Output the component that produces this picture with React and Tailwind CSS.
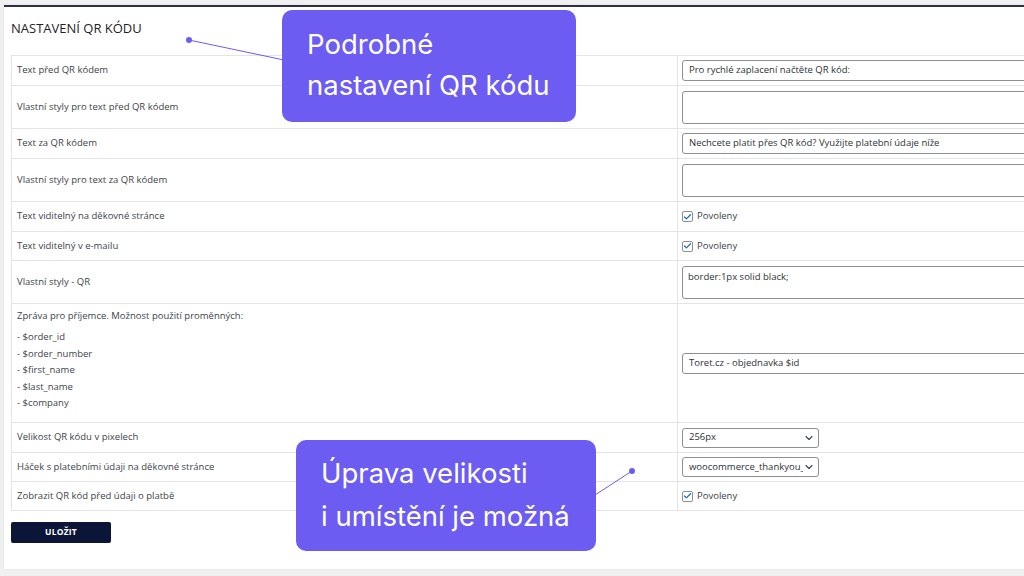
import { ChevronDown, Check } from "lucide-react";

const font = { fontFamily: '"Open Sans", "Noto Sans", sans-serif' };

const Input = ({ value }) => (
  <div className="h-[21px] w-[400px] border border-[#8c8f94] rounded-[3px] bg-white flex items-center px-[6px] text-[9.5px] text-[#2c3338]">
    {value}
  </div>
);

const Area = ({ value }) => (
  <div className="h-[33px] w-[400px] border border-[#8c8f94] rounded-[3px] bg-white px-[5px] pt-[3px] text-[9.5px] leading-[14px] text-[#2c3338]">
    {value}
  </div>
);

const Checkbox = () => (
  <div className="flex items-center gap-[4px] text-[9.5px] text-[#3c434a]">
    <div className="w-[11px] h-[11px] border border-[#8c8f94] rounded-[2px] bg-white flex items-center justify-center">
      <Check size={10} strokeWidth={3.5} className="text-[#2271b1]" />
    </div>
    Povoleny
  </div>
);

const Select = ({ value }) => (
  <div className="h-[20px] w-[137px] border border-[#8c8f94] rounded-[3px] bg-white flex items-center pl-[6px] pr-[3px] text-[9.5px] text-[#2c3338]">
    <span className="flex-1 min-w-0 whitespace-nowrap overflow-hidden">{value}</span>
    <ChevronDown size={12} strokeWidth={2.2} className="text-[#3c434a] shrink-0" />
  </div>
);

const Row = ({ h, label, children, top }) => (
  <div className={`flex border-b border-[#e4e4e7] ${h}`}>
    <div
      className={`w-[665px] shrink-0 pl-[5px] text-[9.5px] text-[#3c434a] flex ${
        top ? "items-start" : "items-center"
      }`}
    >
      {label}
    </div>
    <div className="flex-1 border-l border-[#e4e4e7] pl-[4px] flex items-center">
      {children}
    </div>
  </div>
);

export default function App() {
  const vars = ["$order_id", "$order_number", "$first_name", "$last_name", "$company"];
  return (
    <div
      className="relative w-[1024px] h-[576px] overflow-hidden bg-[#f0f0f1] pt-[5px] pl-[4px]"
      style={font}
    >
      <div className="w-[1040px] h-[564px] bg-white border-t-2 border-[#2d2f45] shadow-[0_0_1px_rgba(0,0,0,0.15)] pl-[7px]">
        <h2 className="pt-[13px] text-[13px] leading-[16px] text-[#1d2327] uppercase">
          Nastavení QR kódu
        </h2>

        <div className="mt-[19px] border-t border-l border-[#e4e4e7] w-[1040px]">
          <Row h="h-[30px]" label="Text před QR kódem">
            <Input value="Pro rychlé zaplacení načtěte QR kód:" />
          </Row>
          <Row h="h-[43px]" label="Vlastní styly pro text před QR kódem">
            <Area value="" />
          </Row>
          <Row h="h-[30px]" label="Text za QR kódem">
            <Input value="Nechcete platit přes QR kód? Využijte platební údaje níže" />
          </Row>
          <Row h="h-[43px]" label="Vlastní styly pro text za QR kódem">
            <Area value="" />
          </Row>
          <Row h="h-[30px]" label="Text viditelný na děkovné stránce">
            <Checkbox />
          </Row>
          <Row h="h-[29px]" label="Text viditelný v e-mailu">
            <Checkbox />
          </Row>
          <Row h="h-[43px]" label="Vlastní styly - QR">
            <Area value="border:1px solid black;" />
          </Row>
          <Row
            h="h-[119px]"
            top
            label={
              <div className="pt-[5px]">
                <div className="leading-[13px]">
                  Zpráva pro příjemce. Možnost použití proměnných:
                </div>
                <div className="mt-[7px]">
                  {vars.map((v) => (
                    <div key={v} className="leading-[16.5px]">
                      - {v}
                    </div>
                  ))}
                </div>
              </div>
            }
          >
            <Input value="Toret.cz - objednavka $id" />
          </Row>
          <Row h="h-[30px]" label="Velikost QR kódu v pixelech">
            <Select value="256px" />
          </Row>
          <Row h="h-[29px]" label="Háček s platebními údaji na děkovné stránce">
            <Select value="woocommerce_thankyou_$" />
          </Row>
          <Row h="h-[29px]" label="Zobrazit QR kód před údaji o platbě">
            <Checkbox />
          </Row>
        </div>

        <button className="mt-[11px] w-[100px] h-[21px] rounded-[2px] bg-[#0b1538] text-white text-[8.5px] font-bold tracking-wide">
          ULOŽIT
        </button>
      </div>

      <svg className="absolute left-0 top-0 pointer-events-none" width="1024" height="576">
        <line x1="189" y1="40" x2="284" y2="60" stroke="#6c5cf2" strokeWidth="1" />
        <circle cx="189" cy="40" r="3" fill="#6c5cf2" />
        <line x1="595" y1="495" x2="632" y2="471" stroke="#6c5cf2" strokeWidth="1" />
        <circle cx="632" cy="471" r="3" fill="#6c5cf2" />
      </svg>

      <div
        className="absolute left-[282px] top-[10px] w-[294px] h-[112px] rounded-[10px] bg-[#6c5cf2] text-white text-[27.5px] leading-[41px] pl-[25px] pt-[14px]"
        style={{ fontFamily: "Inter, sans-serif" }}
      >
        <div>Podrobné</div>
        <div>nastavení QR kódu</div>
      </div>

      <div
        className="absolute left-[296px] top-[440px] w-[300px] h-[111px] rounded-[10px] bg-[#6c5cf2] text-white text-[27.5px] leading-[43px] pl-[25px] pt-[12px]"
        style={{ fontFamily: "Inter, sans-serif" }}
      >
        <div>Úprava velikosti</div>
        <div>i umístění je možná</div>
      </div>
    </div>
  );
}
